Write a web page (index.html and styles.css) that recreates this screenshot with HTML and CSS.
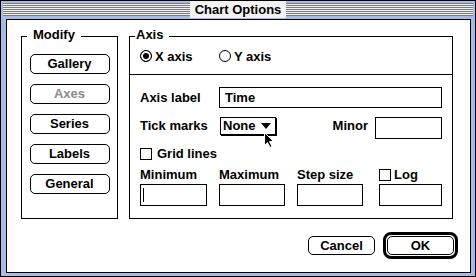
FILE: index.html
```html
<!DOCTYPE html>
<html>
  <head>
    <meta charset="UTF-8">
    <link rel="stylesheet" href="styles.css">
  </head>
  <body>
    <div class="window">
      <div class="titlebar">
        <div class="stripes"></div>
        <div class="title">Chart Options</div>
        <div class="stripes"></div>
      </div>
      <div class="content">
        <div class="groups">
          <div class="group modify">
            <span class="group-title">Modify</span>
            <button class="btn">Gallery</button>
            <button class="btn dim">Axes</button>
            <button class="btn">Series</button>
            <button class="btn">Labels</button>
            <button class="btn">General</button>
          </div>
          <div class="group axis">
            <span class="group-title">Axis</span>
            <div class="radios">
              <label class="radio"><span class="dot on"></span>X axis</label>
              <label class="radio"><span class="dot"></span>Y axis</label>
            </div>
            <div class="fields">
              <div class="row">
                <span class="lbl">Axis label</span>
                <div class="field wide">Time</div>
              </div>
              <div class="row tick">
                <span class="lbl tick-lbl">Tick marks</span>
                <div class="popup">None<span class="tri"></span></div>
                <span class="minor">Minor</span>
                <div class="field small"></div>
              </div>
              <div class="row check-row">
                <span class="box"></span>Grid lines
              </div>
              <div class="grid">
                <span>Minimum</span>
                <span>Maximum</span>
                <span>Step size</span>
                <span class="log"><span class="box"></span>Log</span>
                <div class="field"><span class="caret"></span></div>
                <div class="field"></div>
                <div class="field"></div>
                <div class="field"></div>
              </div>
            </div>
          </div>
        </div>
        <div class="actions">
          <button class="btn act">Cancel</button>
          <div class="default"><button class="btn act">OK</button></div>
        </div>
      </div>
      <svg class="pointer" width="12" height="18" viewBox="0 0 12 18">
        <path d="M1.5 1.5 L1.5 14.5 L4.5 11.5 L7 16.5 L9 15.5 L6.5 10.5 L10.5 10.5 Z" fill="#000" stroke="#fff" stroke-width="1"/>
      </svg>
    </div>
  </body>
</html>
```

FILE: styles.css
```css
body { margin: 0; background: #fff; }
.window {
  position: relative;
  width: 476px;
  height: 277px;
  box-sizing: border-box;
  border: 1px solid #000;
  background: #a6bbe6;
  padding: 0 4px 3px 5px;
  display: flex;
  flex-direction: column;
  font-family: "Liberation Sans", Arial, sans-serif;
  font-weight: bold;
  font-size: 13px;
  color: #000;
}
.titlebar {
  height: 18px;
  margin: 0 -2px 0 -3px;
  display: flex;
  align-items: flex-start;
}
.stripes {
  flex: 1;
  height: 13px;
  margin-top: 2px;
  background: repeating-linear-gradient(to bottom, #7a7a7a 0 1px, #f2f2f2 1px 2px);
}
.title {
  padding: 0 5px;
  height: 17px;
  line-height: 18px;
  background: #f2f2f2;
  white-space: nowrap;
}
.content {
  flex: 1;
  border: 1px solid #000;
  background: #fff;
  padding: 16px 12px 0 14px;
}
.groups {
  display: flex;
  gap: 11px;
}
.group {
  position: relative;
  border: 1px solid #000;
}
.group-title {
  position: absolute;
  top: -10px;
  left: 5px;
  line-height: 16px;
  background: #fff;
}
.modify {
  width: 95px;
  height: 181px;
  padding-top: 17px;
  box-sizing: content-box;
  height: 164px;
  display: flex;
  flex-direction: column;
  align-items: center;
  gap: 10px;
}
.modify .group-title { padding: 0 6px 0 6px; }
.btn {
  font: inherit;
  color: #000;
  background: #fff;
  border: 1px solid #000;
  border-radius: 5px;
  padding: 0;
  width: 80px;
  height: 20px;
  line-height: 18px;
  text-align: center;
}
.btn.dim { color: #8a8a8a; }
.axis { width: 322px; }
.axis .group-title { padding: 0 6px 0 1px; }
.radios {
  height: 38px;
  box-sizing: border-box;
  padding: 1px 0 0 10px;
  display: flex;
  align-items: center;
  border-bottom: 1px solid #000;
}
.radio {
  width: 79px;
  display: flex;
  align-items: center;
  gap: 3px;
}
.dot {
  width: 10px;
  height: 10px;
  border: 1px solid #000;
  border-radius: 50%;
}
.dot.on {
  background: #000;
  box-shadow: inset 0 0 0 2px #fff;
}
.fields {
  padding: 12px 10px 11px 10px;
}
.row {
  display: flex;
  align-items: center;
}
.lbl { width: 79px; }
.field {
  border: 1px solid #000;
  height: 20px;
  box-sizing: border-box;
  line-height: 18px;
  padding-left: 5px;
  display: flex;
  align-items: center;
}
.field.wide { flex: 1; height: 21px; }
.tick {
  margin-top: 9px;
  align-items: flex-start;
  line-height: 18px;
}
.tick-lbl { width: 80px; }
.popup {
  width: 56px;
  height: 18px;
  box-sizing: border-box;
  border: 1px solid #000;
  box-shadow: 1px 1px 0 #000;
  padding-left: 2px;
  line-height: 16px;
  display: flex;
  align-items: center;
}
.tri {
  margin-left: 5px;
  width: 0;
  height: 0;
  border-left: 5px solid transparent;
  border-right: 5px solid transparent;
  border-top: 6px solid #000;
}
.minor { margin-left: auto; }
.field.small { width: 67px; height: 22px; margin-left: 7px; }
.check-row {
  margin-top: 8px;
  line-height: 14px;
  gap: 5px;
}
.box {
  width: 10px;
  height: 10px;
  border: 1px solid #000;
  display: inline-block;
}
.grid {
  margin-top: 7px;
  display: grid;
  grid-template-columns: 79px 78px 82px 63px;
  grid-template-rows: 14px 22px;
  row-gap: 2px;
  line-height: 14px;
}
.grid .field { height: 22px; width: 67px; }
.grid .field:nth-of-type(2),
.grid .field:nth-of-type(3) { width: 66px; }
.grid .field:nth-of-type(4) { width: 63px; }
.log {
  display: flex;
  align-items: center;
  gap: 3px;
}
.caret {
  width: 1px;
  height: 14px;
  margin-left: -3px;
  background: #000;
}
.actions {
  margin-top: 13px;
  display: flex;
  justify-content: flex-end;
  align-items: center;
  gap: 8px;
}
.btn.act { width: 67px; height: 19px; line-height: 17px; }
.default {
  border: 3px solid #000;
  border-radius: 8px;
  padding: 1px;
  display: flex;
}
.pointer {
  position: absolute;
  left: 262px;
  top: 130px;
}
```
